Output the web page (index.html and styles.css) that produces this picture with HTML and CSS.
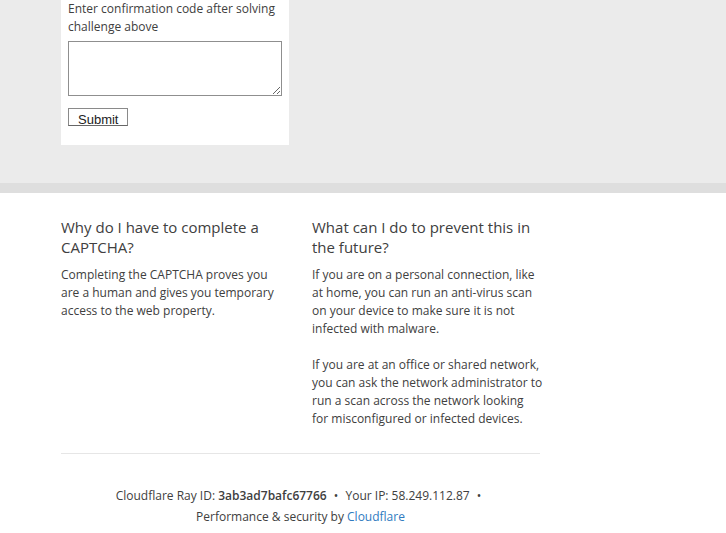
FILE: index.html
```html
<!DOCTYPE html>
<html lang="en">
<head>
  <meta charset="UTF-8" />
  <title>Attention Required! | Cloudflare</title>
  <link rel="stylesheet" href="styles.css">
</head>
<body>
  <div class="challenge-area">
    <div class="wrapper">
      <div class="card">
        <p class="card-label">Enter confirmation code after solving challenge above</p>
        <textarea class="code-input"></textarea>
        <button class="btn">Submit</button>
      </div>
    </div>
  </div>

  <div class="wrapper">
    <div class="columns">
      <div>
        <h2>Why do I have to complete a CAPTCHA?</h2>
        <p>Completing the CAPTCHA proves you are a human and gives you temporary access to the web property.</p>
      </div>
      <div>
        <h2>What can I do to prevent this in the future?</h2>
        <p>If you are on a personal connection, like at home, you can run an anti-virus scan on your device to make sure it is not infected with malware.</p>
        <p>If you are at an office or shared network, you can ask the network administrator to run a scan across the network looking for&nbsp;misconfigured or infected devices.</p>
      </div>
    </div>

    <div class="footer">
      <p>
        <span>Cloudflare Ray ID: <strong>3ab3ad7bafc67766</strong></span>
        <span class="sep">&bull;</span>
        <span>Your IP: 58.249.112.87</span>
        <span class="sep">&bull;</span>
        <span class="perf">Performance &amp; security by <a href="#">Cloudflare</a></span>
      </p>
    </div>
  </div>
</body>
</html>
```

FILE: styles.css
```css
body {
  margin: 0;
  font-family: 'Open Sans', 'Noto Sans', sans-serif;
  font-size: 12px;
  font-weight: 400;
  line-height: 18px;
  color: #404040;
  background: #fff;
}
p {
  margin: 0;
}
.wrapper {
  width: 479px;
  margin-left: 61px;
}
.challenge-area {
  background: #ebebeb;
  border-bottom: 10px solid #dedede;
  padding-bottom: 38px;
}
.card {
  width: 214px;
  background: #fff;
  padding: 0 7px 19px;
}
.code-input {
  display: block;
  box-sizing: border-box;
  width: 214px;
  height: 55px;
  margin: 5px 0 12px;
  border: 1px solid #8f8f8f;
  resize: vertical;
}
.btn {
  display: block;
  box-sizing: border-box;
  height: 18px;
  padding: 4px 9px 0;
  border: 1px solid #8a8a8a;
  border-bottom-color: #666;
  background: #fff;
  color: #222;
  font-family: 'Liberation Sans', Arial, sans-serif;
  font-size: 13px;
  line-height: 14px;
  overflow: hidden;
}
.columns {
  display: grid;
  grid-template-columns: 224px 233px;
  column-gap: 27px;
  padding-top: 24px;
  padding-bottom: 25px;
  margin-right: -5px;
}
h2 {
  margin: 0 0 9px;
  font-size: 15px;
  font-weight: 400;
  line-height: 20px;
  color: #404040;
}
.columns p + p {
  margin-top: 18px;
}
.footer {
  border-top: 1px solid #e6e6e6;
  padding-top: 31px;
  text-align: center;
  line-height: 21px;
  font-size: 12px;
}
.footer strong {
  font-weight: 600;
}
.sep {
  margin: 0 4px;
}
.perf {
  display: inline-block;
}
.footer a {
  color: #2f7bbf;
  text-decoration: none;
}
```
